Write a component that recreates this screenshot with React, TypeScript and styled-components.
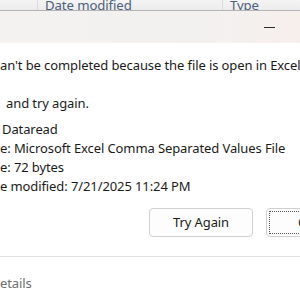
import React from 'react';
import styled, { createGlobalStyle } from 'styled-components';

const GlobalStyle = createGlobalStyle`
  html, body {
    margin: 0;
    padding: 0;
    background: #ffffff;
  }
  body {
    width: 300px;
    height: 300px;
    overflow: hidden;
    font-family: "Noto Sans", "Open Sans", sans-serif;
  }
`;

const Page = styled.div`
  width: 300px;
  height: 300px;
  overflow: hidden;
  display: flex;
  flex-direction: column;
`;

const ExplorerHeader = styled.div`
  height: 10px;
  flex: none;
  display: flex;
  overflow: hidden;
  background: linear-gradient(#f4f4f4, #ececec);
`;

const HeaderCol = styled.div<{ $w: number }>`
  width: ${(p) => p.$w}px;
  flex: none;
  border-right: 1px solid #dcdcdc;
  padding-left: 7px;
  box-sizing: border-box;
  font-size: 13.2px;
  letter-spacing: -0.1px;
  line-height: 16px;
  margin-top: -3px;
  color: #4d607d;
  white-space: nowrap;
  overflow: hidden;
`;

const Dialog = styled.div`
  flex: 1;
  display: flex;
  flex-direction: column;
  border-top: 1px solid #b4b4b4;
  background: #ffffff;
`;

const TitleBar = styled.div`
  height: 32px;
  flex: none;
  display: flex;
  justify-content: flex-end;
  background: linear-gradient(90deg, #f3f2f1 0%, #f3f1f0 70%, #f7efec 100%);
`;

const CaptionButton = styled.div<{ $w?: number }>`
  width: ${(p) => p.$w ?? 46}px;
  flex: none;
  display: flex;
  align-items: center;
  justify-content: center;
`;

const MinGlyph = styled.div`
  width: 11px;
  height: 1px;
  margin-top: 1px;
  background: #2b2b2b;
`;

const Body = styled.div`
  padding: 13px 0 0 0;
  font-size: 13px;
  letter-spacing: -0.1px;
  line-height: 19.3px;
  color: #1b1b1b;
  white-space: nowrap;
  overflow: hidden;
`;

const Para = styled.p<{ $indent?: number }>`
  margin: 0 0 19px 0;
  padding-left: ${(p) => p.$indent ?? 0}px;
`;

const InfoBlock = styled.div`
  margin-top: -13px;
  display: flex;
  flex-direction: column;
`;

const InfoLine = styled.div<{ $indent?: number }>`
  padding-left: ${(p) => p.$indent ?? 0}px;
`;

const ButtonRow = styled.div`
  display: flex;
  gap: 13px;
  padding: 11px 0 0 149px;
`;

const Button = styled.div<{ $focused?: boolean }>`
  position: relative;
  width: 104px;
  height: 29px;
  box-sizing: border-box;
  flex: none;
  border: 1px solid #d1d1d1;
  border-radius: 4px;
  background: #fdfdfd;
  display: flex;
  align-items: center;
  justify-content: center;
  font-size: 13px;
  color: #1b1b1b;
  ${(p) =>
    p.$focused &&
    `
    &::after {
      content: '';
      position: absolute;
      inset: 2px;
      border: 1px dotted #555;
    }
  `}
`;

const Footer = styled.div`
  margin-top: 19px;
  border-top: 1px solid #e3e3e3;
  padding-top: 17px;
  font-size: 13px;
  letter-spacing: -0.1px;
  line-height: 19px;
  color: #6e6e6e;
`;

export default function App() {
  return (
    <Page>
      <GlobalStyle />
      <ExplorerHeader>
        <HeaderCol $w={38} />
        <HeaderCol $w={185}>Date modified</HeaderCol>
        <HeaderCol $w={200}>Type</HeaderCol>
      </ExplorerHeader>
      <Dialog>
        <TitleBar>
          <CaptionButton>
            <MinGlyph />
          </CaptionButton>
          <CaptionButton $w={8} />
        </TitleBar>
        <Body>
          <Para>an't be completed because the file is open in Excel 2016</Para>
          <Para $indent={6}>and try again.</Para>
          <InfoBlock>
            <InfoLine $indent={2}>Dataread</InfoLine>
            <InfoLine>e: Microsoft Excel Comma Separated Values File</InfoLine>
            <InfoLine>e: 72 bytes</InfoLine>
            <InfoLine>e modified: 7/21/2025 11:24 PM</InfoLine>
          </InfoBlock>
          <ButtonRow>
            <Button>Try Again</Button>
            <Button $focused>Cancel</Button>
          </ButtonRow>
        </Body>
        <Footer>etails</Footer>
      </Dialog>
    </Page>
  );
}
